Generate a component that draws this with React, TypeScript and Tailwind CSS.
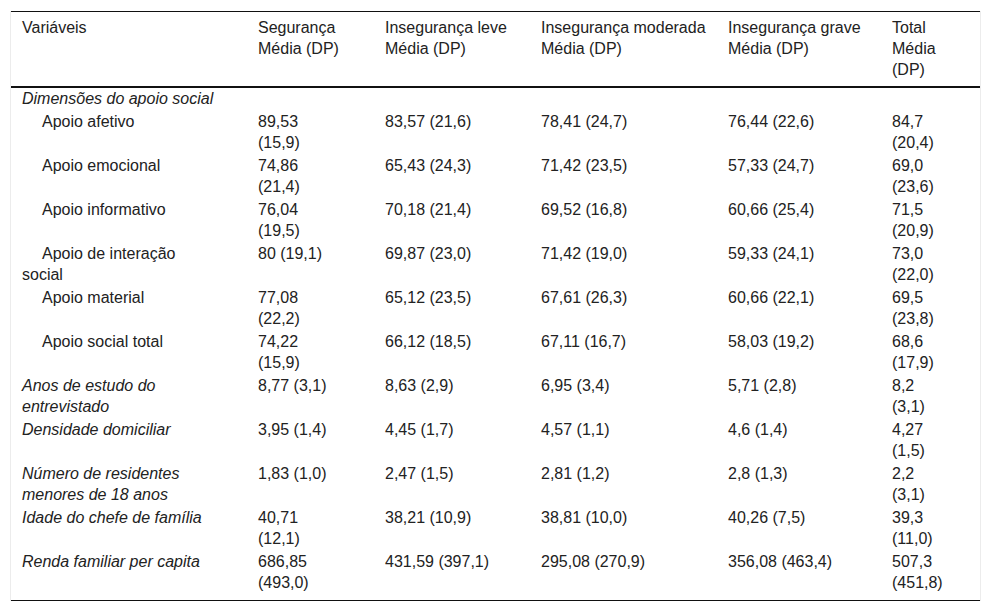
const rows: { label: string; kind: "group" | "sub" | "main"; v: string[] }[] = [
  { label: "Dimensões do apoio social", kind: "group", v: [] },
  { label: "Apoio afetivo", kind: "sub", v: ["89,53 (15,9)", "83,57 (21,6)", "78,41 (24,7)", "76,44 (22,6)", "84,7 (20,4)"] },
  { label: "Apoio emocional", kind: "sub", v: ["74,86 (21,4)", "65,43 (24,3)", "71,42 (23,5)", "57,33 (24,7)", "69,0 (23,6)"] },
  { label: "Apoio informativo", kind: "sub", v: ["76,04 (19,5)", "70,18 (21,4)", "69,52 (16,8)", "60,66 (25,4)", "71,5 (20,9)"] },
  { label: "Apoio de interação social", kind: "sub", v: ["80 (19,1)", "69,87 (23,0)", "71,42 (19,0)", "59,33 (24,1)", "73,0 (22,0)"] },
  { label: "Apoio material", kind: "sub", v: ["77,08 (22,2)", "65,12 (23,5)", "67,61 (26,3)", "60,66 (22,1)", "69,5 (23,8)"] },
  { label: "Apoio social total", kind: "sub", v: ["74,22 (15,9)", "66,12 (18,5)", "67,11 (16,7)", "58,03 (19,2)", "68,6 (17,9)"] },
  { label: "Anos de estudo do entrevistado", kind: "main", v: ["8,77 (3,1)", "8,63 (2,9)", "6,95 (3,4)", "5,71 (2,8)", "8,2 (3,1)"] },
  { label: "Densidade domiciliar", kind: "main", v: ["3,95 (1,4)", "4,45 (1,7)", "4,57 (1,1)", "4,6 (1,4)", "4,27 (1,5)"] },
  { label: "Número de residentes menores de 18 anos", kind: "main", v: ["1,83 (1,0)", "2,47 (1,5)", "2,81 (1,2)", "2,8 (1,3)", "2,2 (3,1)"] },
  { label: "Idade do chefe de família", kind: "main", v: ["40,71 (12,1)", "38,21 (10,9)", "38,81 (10,0)", "40,26 (7,5)", "39,3 (11,0)"] },
  { label: "Renda familiar per capita", kind: "main", v: ["686,85 (493,0)", "431,59 (397,1)", "295,08 (270,9)", "356,08 (463,4)", "507,3 (451,8)"] },
];

// per-column right padding so the wrapping matches the source table
const padR = ["pr-[30px]", "pr-[33px]", "pr-[8px]", "pr-[6px]", "pr-[8px]", "pr-[35px]"];

export default function App() {
  return (
    <div className="bg-white pt-[11px] pl-[10px] pr-[11px] pb-[12px] font-['Liberation_Sans',Arial,sans-serif] text-[16px] leading-[21px] text-[#222]">
      <div className="border-x border-[#ececec]">
        <table className="w-full table-fixed border-collapse text-left">
          <colgroup>
            <col className="w-[236px]" />
            <col className="w-[127px]" />
            <col className="w-[156px]" />
            <col className="w-[187px]" />
            <col className="w-[164px]" />
            <col className="w-[99px]" />
          </colgroup>
          <thead>
            <tr className="border-t border-b-2 border-[#111] align-top">
              {["Variáveis", "Segurança Média (DP)", "Insegurança leve Média (DP)", "Insegurança moderada Média (DP)", "Insegurança grave Média (DP)", "Total Média (DP)"].map((h, i) => (
                <th key={i} className={`font-normal pl-[11px] pt-[5px] pb-[6px] ${padR[i]}`}>
                  {i === 0 ? h : (
                    <>
                      {h.replace(" Média (DP)", "")}
                      <br />
                      Média (DP)
                    </>
                  )}
                </th>
              ))}
            </tr>
          </thead>
          <tbody>
            {rows.map((r, ri) => {
              const last = ri === rows.length - 1;
              const py = r.kind === "group" ? "pt-0 pb-[1px]" : last ? "pt-[1px] pb-[7px]" : "py-[1px]";
              return (
                <tr key={ri} className={`align-top ${last ? "border-b border-[#111]" : ""}`}>
                  <td className={`pl-[11px] ${py} ${padR[0]} ${r.kind === "sub" ? "" : "italic"}`}>
                    {r.kind === "sub" ? <span className="inline-block w-[20px]" /> : null}
                    {r.label}
                  </td>
                  {r.kind === "group"
                    ? [1, 2, 3, 4, 5].map((c) => <td key={c} />)
                    : r.v.map((v, ci) => (
                        <td key={ci} className={`pl-[11px] ${py} ${padR[ci + 1]}`}>
                          {v}
                        </td>
                      ))}
                </tr>
              );
            })}
          </tbody>
        </table>
      </div>
    </div>
  );
}
